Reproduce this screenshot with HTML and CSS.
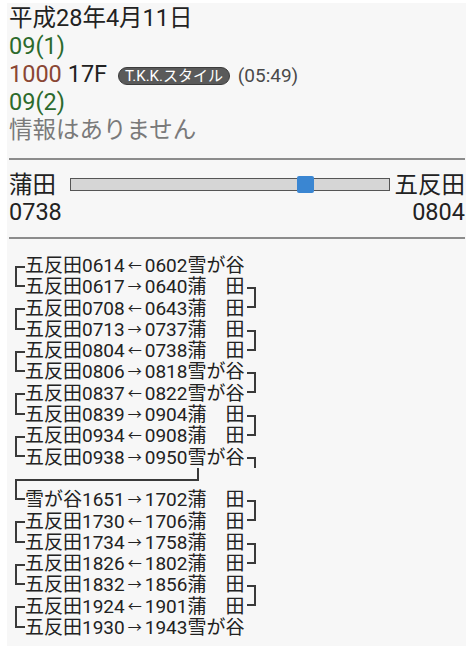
FILE: index.html
```html
<!DOCTYPE html>
<html lang="ja">
<head>
<meta charset="utf-8">
<link rel="stylesheet" href="styles.css">
</head>
<body>
<div class="panel">
  <div class="head">
    <div class="line">平成28年4月11日</div>
    <div class="line green">09(1)</div>
    <div class="line"><span class="brown">1000</span> 17F <span class="tag">T.K.K.スタイル</span> <span class="time">(05:49)</span></div>
    <div class="line green">09(2)</div>
    <div class="line muted">情報はありません</div>
  </div>
  <div class="rule rule-1"></div>
  <div class="route">
    <div class="route-row slider-row">
      <span class="label">蒲田</span>
      <div class="track"><div class="thumb" style="left:71.5%"></div></div>
      <span class="label">五反田</span>
    </div>
    <div class="route-row times"><span>0738</span><span>0804</span></div>
  </div>
  <div class="rule rule-2"></div>
  <div class="table">
    <div class="row"><span class="lb top"></span><span class="txt"><span class="st">五反田</span><span class="t">0614</span><span class="ar">←</span><span class="t">0602</span><span class="st">雪が谷</span></span><span class="rb"></span></div>
    <div class="row"><span class="lb bot"></span><span class="txt"><span class="st">五反田</span><span class="t">0617</span><span class="ar">→</span><span class="t">0640</span><span class="st">蒲　田</span></span><span class="rb top"></span></div>
    <div class="row"><span class="lb top"></span><span class="txt"><span class="st">五反田</span><span class="t">0708</span><span class="ar">←</span><span class="t">0643</span><span class="st">蒲　田</span></span><span class="rb bot"></span></div>
    <div class="row"><span class="lb bot"></span><span class="txt"><span class="st">五反田</span><span class="t">0713</span><span class="ar">→</span><span class="t">0737</span><span class="st">蒲　田</span></span><span class="rb top"></span></div>
    <div class="row"><span class="lb top"></span><span class="txt"><span class="st">五反田</span><span class="t">0804</span><span class="ar">←</span><span class="t">0738</span><span class="st">蒲　田</span></span><span class="rb bot"></span></div>
    <div class="row"><span class="lb bot"></span><span class="txt"><span class="st">五反田</span><span class="t">0806</span><span class="ar">→</span><span class="t">0818</span><span class="st">雪が谷</span></span><span class="rb top"></span></div>
    <div class="row"><span class="lb top"></span><span class="txt"><span class="st">五反田</span><span class="t">0837</span><span class="ar">←</span><span class="t">0822</span><span class="st">雪が谷</span></span><span class="rb bot"></span></div>
    <div class="row"><span class="lb bot"></span><span class="txt"><span class="st">五反田</span><span class="t">0839</span><span class="ar">→</span><span class="t">0904</span><span class="st">蒲　田</span></span><span class="rb top"></span></div>
    <div class="row"><span class="lb top"></span><span class="txt"><span class="st">五反田</span><span class="t">0934</span><span class="ar">←</span><span class="t">0908</span><span class="st">蒲　田</span></span><span class="rb bot"></span></div>
    <div class="row"><span class="lb bot"></span><span class="txt"><span class="st">五反田</span><span class="t">0938</span><span class="ar">→</span><span class="t">0950</span><span class="st">雪が谷</span></span><span class="rb top"></span></div>
    <div class="gap"><div class="gap-top"></div><div class="gap-bot"></div></div>
    <div class="row"><span class="lb bot"></span><span class="txt"><span class="st">雪が谷</span><span class="t">1651</span><span class="ar">→</span><span class="t">1702</span><span class="st">蒲　田</span></span><span class="rb top"></span></div>
    <div class="row"><span class="lb top"></span><span class="txt"><span class="st">五反田</span><span class="t">1730</span><span class="ar">←</span><span class="t">1706</span><span class="st">蒲　田</span></span><span class="rb bot"></span></div>
    <div class="row"><span class="lb bot"></span><span class="txt"><span class="st">五反田</span><span class="t">1734</span><span class="ar">→</span><span class="t">1758</span><span class="st">蒲　田</span></span><span class="rb top"></span></div>
    <div class="row"><span class="lb top"></span><span class="txt"><span class="st">五反田</span><span class="t">1826</span><span class="ar">←</span><span class="t">1802</span><span class="st">蒲　田</span></span><span class="rb bot"></span></div>
    <div class="row"><span class="lb bot"></span><span class="txt"><span class="st">五反田</span><span class="t">1832</span><span class="ar">→</span><span class="t">1856</span><span class="st">蒲　田</span></span><span class="rb top"></span></div>
    <div class="row"><span class="lb top"></span><span class="txt"><span class="st">五反田</span><span class="t">1924</span><span class="ar">←</span><span class="t">1901</span><span class="st">蒲　田</span></span><span class="rb bot"></span></div>
    <div class="row"><span class="lb bot"></span><span class="txt"><span class="st">五反田</span><span class="t">1930</span><span class="ar">→</span><span class="t">1943</span><span class="st">雪が谷</span></span><span class="rb"></span></div>
  </div>
</div>
</body>
</html>
```
FILE: styles.css
```css
html, body {
  margin: 0;
  padding: 0;
  background: #ffffff;
}
body {
  font-family: Roboto, "Noto Sans CJK JP", sans-serif;
  color: #222222;
}
.panel {
  margin: 3px 9px 4px 7px;
  padding: 1px 1px 8px 2px;
  background: #f7f7f7;
}
.head {
  font-size: 23.5px;
  line-height: 28px;
}
.line {
  height: 28px;
  white-space: nowrap;
}
.green { color: #2c6a2c; }
.brown { color: #8a4634; }
.muted { color: #7a7a7a; }
.tag {
  display: inline-block;
  vertical-align: middle;
  font-size: 15px;
  line-height: 16px;
  padding: 0 6px;
  margin-left: 5px;
  border: 1px solid #3c3c3c;
  border-radius: 9px;
  background: #5a5a5a;
  color: #ffffff;
}
.time {
  font-size: 19px;
  line-height: 20px;
  color: #4a4a4a;
  margin-left: 2px;
}
.rule {
  border-top: 2px solid #8c8c8c;
}
.rule-1 { margin: 14px 0 8px 0; }
.rule-2 { margin: 11px 0 16px 0; }
.route {
  font-size: 23.5px;
}
.route-row {
  display: flex;
  justify-content: space-between;
  align-items: center;
}
.slider-row { height: 30px; }
.times { height: 28px; }
.label { white-space: nowrap; }
.track {
  position: relative;
  flex: 1;
  height: 13px;
  margin: 2px 5px 0 14px;
  box-sizing: border-box;
  border: 1px solid #555555;
  background: #d6d6d6;
}
.thumb {
  position: absolute;
  top: -3px;
  width: 17px;
  height: 17px;
  margin-left: -1px;
  border-radius: 2px;
  background: #3a86d2;
}
.table {
  font-size: 19px;
}
.row {
  display: flex;
  height: 21.3px;
  line-height: 21.3px;
  padding-left: 6px;
  white-space: nowrap;
}
.lb {
  flex: none;
  width: 10px;
  box-sizing: border-box;
}
.lb.top {
  align-self: flex-end;
  height: 50%;
  border-left: 2px solid #3a3a3a;
  border-top: 2px solid #3a3a3a;
}
.lb.bot {
  align-self: flex-start;
  height: 50%;
  border-left: 2px solid #3a3a3a;
  border-bottom: 2px solid #3a3a3a;
}
.txt {
  flex: none;
  width: 222px;
  display: flex;
}
.t { flex: none; }
.st { flex: none; }
.ar {
  flex: none;
  width: 20px;
  text-align: center;
  font-size: 14px;
}
.rb {
  flex: none;
  width: 9px;
  box-sizing: border-box;
}
.rb.top {
  align-self: flex-end;
  height: 50%;
  border-right: 2px solid #3a3a3a;
  border-top: 2px solid #3a3a3a;
}
.rb.bot {
  align-self: flex-start;
  height: 50%;
  border-right: 2px solid #3a3a3a;
  border-bottom: 2px solid #3a3a3a;
}
.gap {
  display: flex;
  flex-direction: column;
  height: 21.3px;
  padding-left: 6px;
}
.gap-top {
  height: 50%;
  width: 184px;
  box-sizing: border-box;
  border-right: 2px solid #3a3a3a;
}
.gap-bot {
  height: 50%;
  width: 184px;
  box-sizing: border-box;
  border-left: 2px solid #3a3a3a;
  border-top: 2px solid #3a3a3a;
}
```
